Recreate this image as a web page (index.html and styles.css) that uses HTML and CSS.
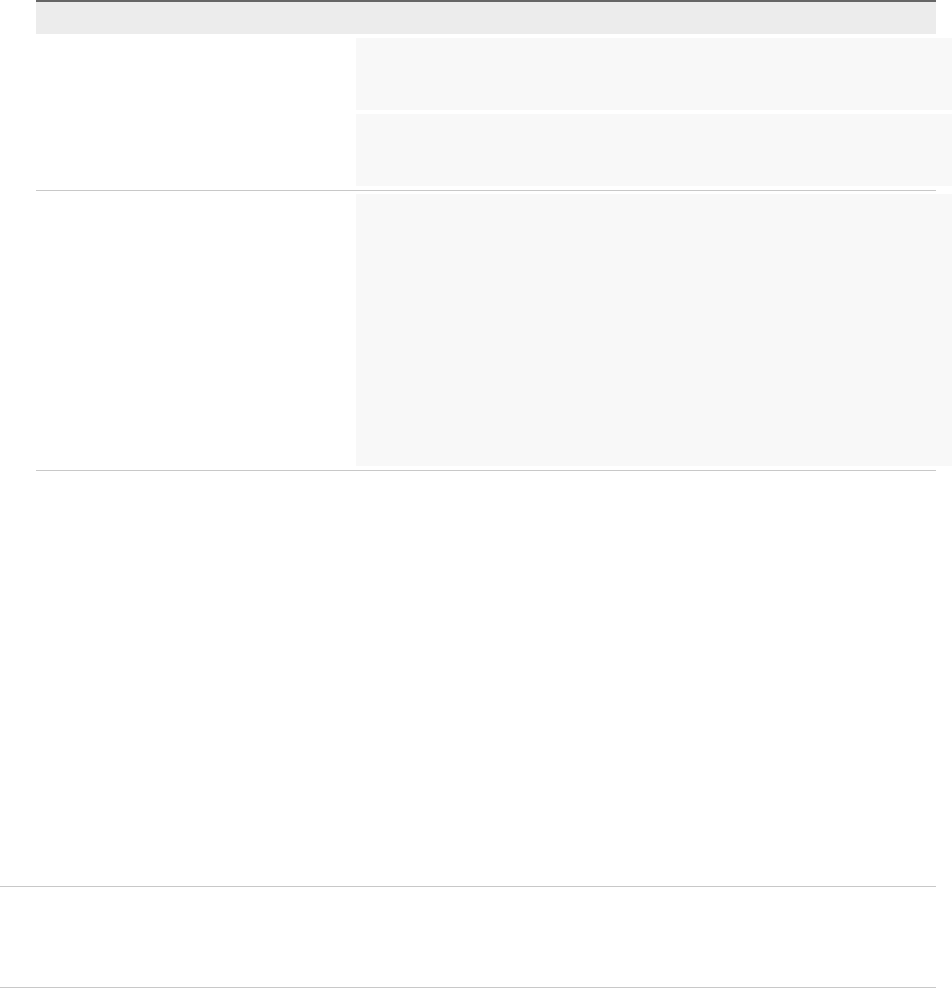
FILE: index.html
```html
<!DOCTYPE html>
<html lang="en">
<head>
<meta charset="utf-8">
<title>Table</title>
<link rel="stylesheet" href="styles.css">
</head>
<body>
<div class="page">
  <div class="table">
    <div class="table-head"></div>
    <div class="row row-first">
      <div class="cell-label"></div>
      <div class="cell-values">
        <div class="block block-short"></div>
        <div class="block block-short"></div>
      </div>
    </div>
    <div class="row row-second">
      <div class="cell-label"></div>
      <div class="cell-values">
        <div class="block block-tall"></div>
      </div>
    </div>
  </div>
  <div class="spacer"></div>
  <div class="footer"></div>
</div>
</body>
</html>
```

FILE: styles.css
```css
html, body {
  margin: 0;
  padding: 0;
  background: #ffffff;
  overflow: hidden;
  font-family: "Liberation Sans", Arial, sans-serif;
}

.page {
  width: 952px;
  height: 988px;
  display: flex;
  flex-direction: column;
}

.table {
  margin-left: 36px;
  width: 900px;
  display: flex;
  flex-direction: column;
}

.table-head {
  height: 32px;
  border-top: 2px solid #666666;
  background: #ececec;
}

.row {
  display: flex;
  border-bottom: 1px solid #c8c8c8;
}

.row-first {
  padding: 4px 0 4px 0;
}

.row-second {
  padding: 3px 0 4px 0;
}

.cell-label {
  width: 320px;
  flex: none;
}

.cell-values {
  display: flex;
  flex-direction: column;
  gap: 4px;
  width: 596px;
  flex: none;
}

.block {
  background: #f8f8f8;
}

.block-short {
  height: 72px;
}

.block-tall {
  height: 272px;
}

.spacer {
  height: 415px;
  flex: none;
}

.footer {
  width: 936px;
  height: 100px;
  border-top: 1px solid #c8c8c8;
  border-bottom: 1px solid #c8c8c8;
}
```
